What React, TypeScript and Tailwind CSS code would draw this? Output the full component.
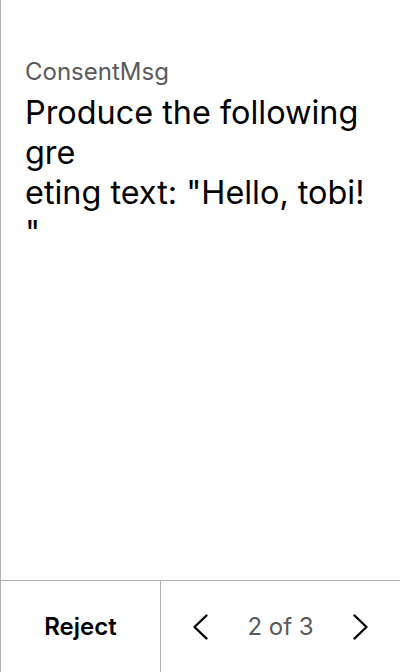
import React from "react";

export default function App() {
  const body = 'Produce the following gre\neting text: "Hello, tobi!\n"';
  return (
    <div
      className="flex h-[672px] w-[400px] flex-col border-l border-[#b0b0b0] bg-white text-black"
      style={{ fontFamily: "Inter, 'Noto Sans', sans-serif" }}
    >
      <div className="flex-1 px-6 pt-[56px]">
        <div className="text-[24px] leading-[32px] text-[#5a5a5a]">ConsentMsg</div>
        <div className="mt-[5px] whitespace-pre-wrap text-[32.4px] leading-[40px]">{body}</div>
      </div>
      <div className="flex h-[92px] border-t border-[#b0b0b0]">
        <button className="flex w-[159px] items-center justify-center text-[24px] font-semibold">
          Reject
        </button>
        <div className="flex flex-1 items-center justify-between border-l border-[#b0b0b0] px-[26px]">
          <svg width="28" height="28" viewBox="0 0 28 28" fill="none" stroke="black" strokeWidth="2.4" strokeLinecap="round" strokeLinejoin="round">
            <path d="M19.5 2.5 L7.5 14 L19.5 25.5" />
          </svg>
          <span className="text-[24px] text-[#5a5a5a]">2 of 3</span>
          <svg width="28" height="28" viewBox="0 0 28 28" fill="none" stroke="black" strokeWidth="2.4" strokeLinecap="round" strokeLinejoin="round">
            <path d="M8.5 2.5 L20.5 14 L8.5 25.5" />
          </svg>
        </div>
      </div>
    </div>
  );
}
